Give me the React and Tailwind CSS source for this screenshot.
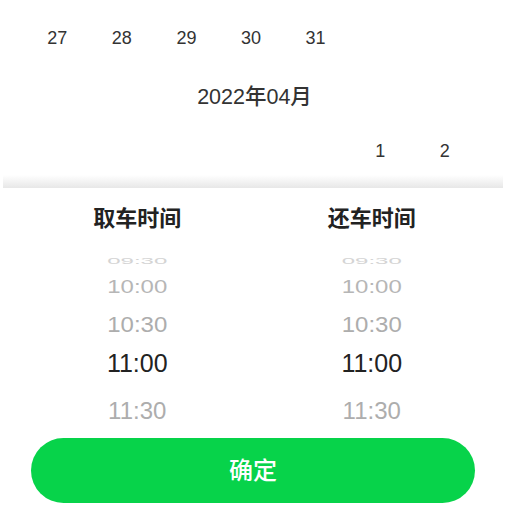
import React from "react";

const num = { fontFamily: '"Liberation Sans", Arial, sans-serif' };
const cjk = { fontFamily: '"Liberation Sans", "Noto Sans CJK SC", sans-serif' };

function Wheel() {
  return (
    <div className="flex flex-col items-center" style={num}>
      <div className="h-[16px] mt-[3px] flex items-center text-[24px] leading-none text-[#d4d4d4] scale-y-[0.4]">09:30</div>
      <div className="h-[36px] flex items-center text-[24px] leading-none text-[#b6b6b6] scale-y-[0.78]">10:00</div>
      <div className="h-[39px] flex items-center text-[24px] leading-none text-[#adadad] scale-y-[0.92]">10:30</div>
      <div className="h-[39px] flex items-center text-[25px] leading-none text-[#222]">11:00</div>
      <div className="h-[47px] pt-[8px] flex items-center text-[24px] leading-none text-[#adadad]">11:30</div>
    </div>
  );
}

export default function App() {
  return (
    <div className="w-[509px] h-[521px] bg-white overflow-hidden flex flex-col" style={cjk}>
      <div className="grid grid-cols-7 w-[452px] ml-[25px] pt-[29px] h-[62px] text-[18px] leading-none text-[#333]" style={num}>
        {["27", "28", "29", "30", "31"].map((d) => (
          <div key={d} className="flex justify-center">{d}</div>
        ))}
      </div>
      <div className="h-[70px] flex items-center justify-center text-[21.5px] font-medium text-[#333]" style={cjk}>
        2022年04月
      </div>
      <div className="grid grid-cols-7 w-[452px] ml-[25px] h-[43px] pt-[10px] text-[18px] leading-none text-[#333]" style={num}>
        <div /><div /><div /><div /><div />
        <div className="flex justify-center">1</div>
        <div className="flex justify-center">2</div>
      </div>
      <div className="mx-[3px] w-[500px] h-[13px] bg-gradient-to-b from-white to-[#e7e7e7]" />
      <div className="flex-1 bg-white flex flex-col">
        <div className="grid grid-cols-2 px-[20px]">
          <div className="flex flex-col items-center">
            <div className="mt-[18px] text-[22px] leading-[26px] font-semibold text-[#222]">取车时间</div>
            <div className="mt-[18px]"><Wheel /></div>
          </div>
          <div className="flex flex-col items-center">
            <div className="mt-[18px] text-[22px] leading-[26px] font-semibold text-[#222]">还车时间</div>
            <div className="mt-[18px]"><Wheel /></div>
          </div>
        </div>
        <div className="mt-[8px] ml-[31px] w-[444px] h-[65px] rounded-full bg-[#07d34a] flex items-center justify-center text-white text-[24px] font-medium">
          确定
        </div>
      </div>
    </div>
  );
}
